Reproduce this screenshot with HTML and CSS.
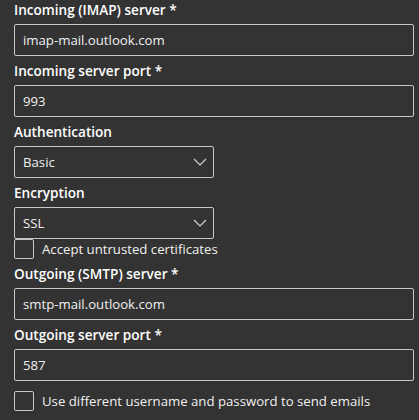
FILE: index.html
```html
<!DOCTYPE html>
<html>
<head>
<meta charset="utf-8">
<link rel="stylesheet" href="styles.css">
</head>
<body>
<div class="form">
  <div class="label first">Incoming (IMAP) server *</div>
  <div class="input wide">imap-mail.outlook.com</div>
  <div class="label">Incoming server port *</div>
  <div class="input wide">993</div>
  <div class="label">Authentication</div>
  <div class="input select"><span>Basic</span><svg class="chev" width="14" height="8" viewBox="0 0 14 8"><path d="M1 1 L7 7 L13 1" fill="none" stroke="#d0d0d0" stroke-width="1.2"/></svg></div>
  <div class="label">Encryption</div>
  <div class="input select"><span>SSL</span><svg class="chev" width="14" height="8" viewBox="0 0 14 8"><path d="M1 1 L7 7 L13 1" fill="none" stroke="#d0d0d0" stroke-width="1.2"/></svg></div>
  <div class="check"><span class="box"></span><span>Accept untrusted certificates</span></div>
  <div class="label">Outgoing (SMTP) server *</div>
  <div class="input wide">smtp-mail.outlook.com</div>
  <div class="label">Outgoing server port *</div>
  <div class="input wide">587</div>
  <div class="check gap"><span class="box"></span><span>Use different username and password to send emails</span></div>
</div>
</body>
</html>
```
FILE: styles.css
```css
html, body {
  margin: 0;
  padding: 0;
  background: #333333;
  height: 100%;
}
body {
  font-family: "Open Sans", "Noto Sans", sans-serif;
  color: #ffffff;
  font-size: 13.2px;
}
.form {
  padding: 0 0 0 14px;
  display: flex;
  flex-direction: column;
  align-items: flex-start;
}
.label {
  font-weight: 600;
  font-size: 13.6px;
  line-height: 20px;
  height: 20px;
  margin-top: 5px;
  margin-bottom: 4px;
  color: #ffffff;
}
.label.first {
  margin-top: 0;
}
.input {
  box-sizing: border-box;
  height: 32px;
  border: 1px solid #c6c6c6;
  border-radius: 2px;
  display: flex;
  align-items: center;
  padding: 0 8px;
  color: #f0f0f0;
}
.wide {
  width: 400px;
}
.select {
  width: 200px;
  justify-content: space-between;
  padding-right: 6px;
}
.chev {
  display: block;
}
.check {
  display: flex;
  align-items: center;
  height: 20px;
  gap: 8px;
  color: #f0f0f0;
}
.check.gap {
  margin-top: 10px;
}
.box {
  box-sizing: border-box;
  width: 20px;
  height: 20px;
  border: 1px solid #c6c6c6;
  border-radius: 2px;
}
```
